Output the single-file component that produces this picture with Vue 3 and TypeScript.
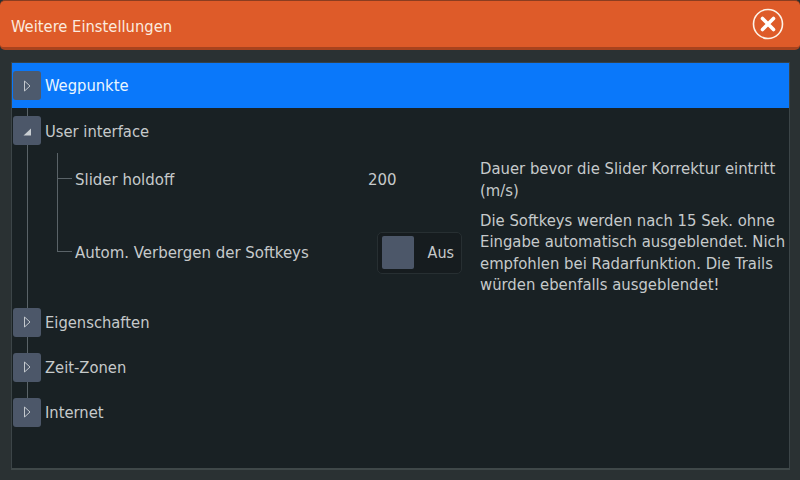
<script setup lang="ts">
interface Node { label: string; open?: boolean; active?: boolean }
const before: Node[] = [
  { label: 'Wegpunkte', active: true },
  { label: 'User interface', open: true },
]
const after: Node[] = [
  { label: 'Eigenschaften' },
  { label: 'Zeit-Zonen' },
  { label: 'Internet' },
]
</script>

<template>
  <div class="screen">
    <header class="title">
      <span class="title-text">Weitere Einstellungen</span>
      <svg class="close" width="32" height="32" viewBox="0 0 32 32">
        <circle cx="16" cy="16" r="14.5" fill="none" stroke="#fdf3e8" stroke-width="1.6" />
        <path d="M10.5 10.5L21.5 21.5M21.5 10.5L10.5 21.5" stroke="#fff" stroke-width="3.6" stroke-linecap="round" />
      </svg>
    </header>
    <main class="panel">
      <div class="trunk"></div>
      <div v-for="n in before" :key="n.label" class="row" :class="{ active: n.active, open: n.open }">
        <span class="toggle">
          <svg width="10" height="12" viewBox="0 0 10 12">
            <path v-if="n.open" d="M1.5 10.5H9V3.5Z" fill="#c9ced2" />
            <path v-else d="M2.5 1L8 6L2.5 11Z" fill="none" stroke="#c3c8cd" stroke-width="1" />
          </svg>
        </span>
        <span class="row-label">{{ n.label }}</span>
      </div>
      <section class="children">
        <div class="branch"></div>
        <div class="child child-slider">
          <span class="child-label">Slider holdoff</span>
          <span class="child-value">200</span>
          <p class="desc">Dauer bevor die Slider Korrektur eintritt (m/s)</p>
        </div>
        <div class="child child-auto">
          <span class="child-label">Autom. Verbergen der Softkeys</span>
          <span class="child-value">
            <span class="switch"><span class="knob"></span><span class="switch-text">Aus</span></span>
          </span>
          <p class="desc">Die Softkeys werden nach 15 Sek. ohne Eingabe automatisch ausgeblendet. Nich empfohlen bei Radarfunktion. Die Trails würden ebenfalls ausgeblendet!</p>
        </div>
      </section>
      <div v-for="n in after" :key="n.label" class="row">
        <span class="toggle">
          <svg width="10" height="12" viewBox="0 0 10 12">
            <path d="M2.5 1L8 6L2.5 11Z" fill="none" stroke="#c3c8cd" stroke-width="1" />
          </svg>
        </span>
        <span class="row-label">{{ n.label }}</span>
      </div>
    </main>
  </div>
</template>

<style scoped>
.screen {
  width: 800px;
  height: 480px;
  box-sizing: border-box;
  padding-bottom: 10px;
  display: flex;
  flex-direction: column;
  overflow: hidden;
  background: #2a3133;
  font-family: "DejaVu Sans Condensed", "DejaVu Sans", sans-serif;
  font-stretch: condensed;
  font-size: 16.4px;
  color: #c6cacb;
}
.title {
  flex: none;
  height: 50px;
  box-sizing: border-box;
  display: flex;
  align-items: center;
  justify-content: space-between;
  padding: 0 16px 0 11px;
  background: #de5b29;
  border-top: 1px solid #8a3d20;
  border-bottom: 3px solid #a8431e;
  border-radius: 5px;
  color: #fbeadf;
}
.title-text {
  padding-top: 5px;
}
.panel {
  flex: 1;
  position: relative;
  margin: 12px 10px 0 11px;
  background: #192124;
  border-top: 1px solid #33414a;
  border-left: 1px solid #3c4548;
  border-right: 1px solid #3c4548;
  border-bottom: 2px solid #3f4849;
}
.trunk {
  position: absolute;
  left: 15px;
  top: 0;
  width: 1px;
  height: 335px;
  background: #5a6368;
}
.row {
  position: relative;
  height: 45px;
  display: flex;
  align-items: center;
  color: #c6cacb;
}
.row.active {
  background: #0a78fa;
  color: #eaf6ff;
}
.toggle {
  flex: none;
  width: 28px;
  height: 29px;
  margin-left: 1px;
  display: flex;
  align-items: center;
  justify-content: center;
  background: #4c5769;
  border-radius: 3px;
}
.row.active .toggle {
  background: #4d5a6d;
}
.row-label {
  margin-left: 4px;
}
.row.open .row-label {
  padding-top: 2px;
}
.children {
  position: relative;
  height: 146.5px;
  font-size: 16.65px;
}
.branch {
  position: absolute;
  left: 45px;
  top: 0;
  width: 14px;
  height: 98px;
  border-left: 1px solid #5a6368;
  border-bottom: 1px solid #5a6368;
}
.branch::before {
  content: "";
  position: absolute;
  left: 0;
  top: 25px;
  width: 14px;
  height: 1px;
  background: #5a6368;
}
.child {
  display: grid;
  grid-template-columns: 293px 112px 1fr;
  align-items: center;
  padding-left: 63px;
}
.child-slider {
  height: 53px;
}
.child-auto {
  height: 93px;
}
.desc {
  margin: 0;
  line-height: 21.3px;
  font-size: 16.5px;
  color: #c6cacb;
}
.switch {
  width: 85px;
  height: 42px;
  margin-left: 9px;
  box-sizing: border-box;
  display: flex;
  align-items: center;
  justify-content: space-between;
  padding: 0 7px 0 4px;
  border: 1px solid #272f32;
  border-radius: 5px;
  background: #161c1f;
  position: relative;
}
.knob {
  width: 32px;
  height: 33px;
  background: #4c5769;
  border-radius: 2px;
}
.switch-text {
  font-size: 16px;
}
</style>
